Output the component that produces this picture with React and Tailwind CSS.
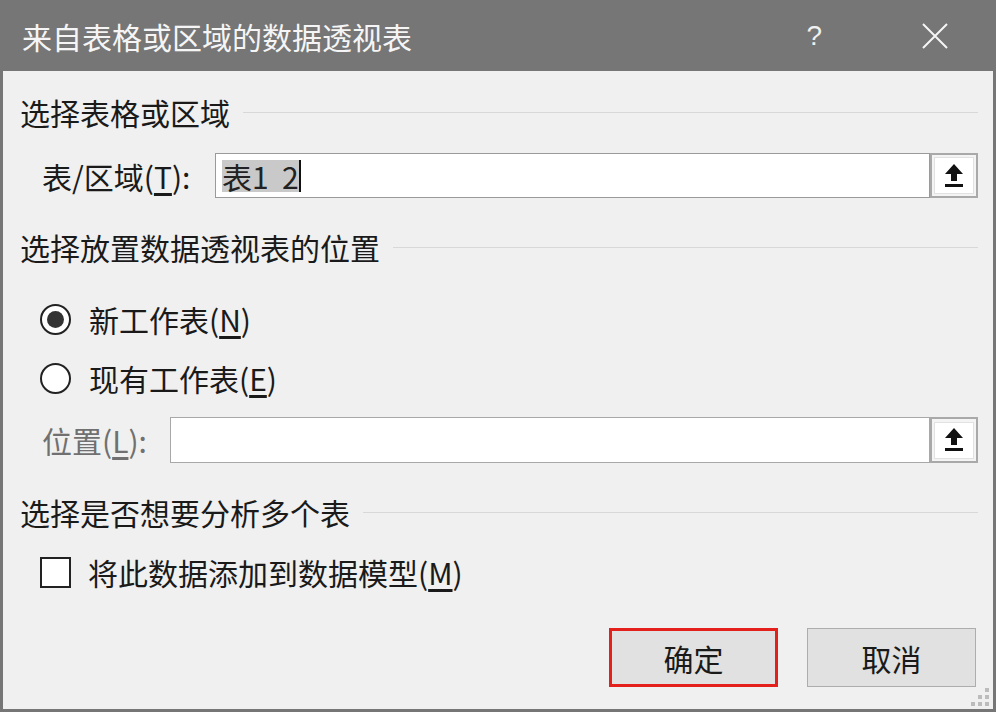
import React from 'react';

const font = { fontFamily: '"Noto Sans CJK SC", "Noto Sans", sans-serif' };

function UploadButton() {
  return (
    <div className="w-[48px] h-full border-2 border-[#a9a9a9] bg-[#f4f4f4] flex items-center justify-center">
      <div className="w-[40px] h-[37px] bg-white border border-[#e2e2e2] flex items-center justify-center">
        <svg width="22" height="26" viewBox="0 0 22 26">
          <path d="M11 1 L20 11 L14 11 L14 18 L8 18 L8 11 L2 11 Z" fill="#111" />
          <rect x="2" y="21" width="18" height="3" fill="#111" />
        </svg>
      </div>
    </div>
  );
}

function Heading({ children }) {
  return (
    <div className="h-[40px] flex items-center gap-[13px]">
      <span className="text-[30px] leading-none text-[#1a1a1a] whitespace-nowrap">{children}</span>
      <div className="flex-1 h-px bg-[#d8d8d8]" />
    </div>
  );
}

function Radio({ checked, children }) {
  return (
    <div className="h-[40px] flex items-center pl-[20px] gap-[18px]">
      <div className="w-[31px] h-[31px] rounded-full border-2 border-[#222] bg-white flex items-center justify-center">
        {checked && <div className="w-[17px] h-[17px] rounded-full bg-[#333]" />}
      </div>
      <span className="text-[30px] leading-none text-[#1a1a1a]">{children}</span>
    </div>
  );
}

export default function App() {
  return (
    <div className="w-[996px] h-[712px] bg-[#767676] flex flex-col overflow-hidden" style={font}>
      {/* Title bar */}
      <div className="h-[71px] flex items-center pl-[22px] pr-[48px] shrink-0">
        <span className="text-[30px] leading-none text-[#f5f5f5]">来自表格或区域的数据透视表</span>
        <div className="flex-1" />
        <span className="text-[28px] leading-none text-[#f0f0f0] font-light mr-[100px]" style={{ fontFamily: '"Liberation Sans", sans-serif' }}>?</span>
        <svg width="26" height="26" viewBox="0 0 26 26">
          <path d="M1 1 L25 25 M25 1 L1 25" stroke="#f5f5f5" strokeWidth="2" />
        </svg>
      </div>

      {/* Body */}
      <div className="flex-1 mx-[3px] mb-[3px] bg-[#f0f0f0] flex flex-col pl-[17px] pr-[15px] relative">
        <div className="mt-[21px]">
          <Heading>选择表格或区域</Heading>
        </div>

        <div className="mt-[21px] h-[45px] flex items-center">
          <span className="w-[195px] pl-[22px] text-[30px] leading-none text-[#1a1a1a] whitespace-nowrap">
            表/区域(<span className="underline underline-offset-4">T</span>):
          </span>
          <div className="flex-1 h-full border border-[#9a9a9a] bg-white flex items-center pl-[6px]">
            <span className="bg-[#c9c9c9] text-[30px] leading-[32px] text-[#222] whitespace-pre">{'表1  2'}</span>
            <span className="w-[2px] h-[32px] bg-[#111]" />
          </div>
          <UploadButton />
        </div>

        <div className="mt-[29px]">
          <Heading>选择放置数据透视表的位置</Heading>
        </div>

        <div className="mt-[32px]">
          <Radio checked>
            新工作表(<span className="underline underline-offset-4">N</span>)
          </Radio>
        </div>
        <div className="mt-[19px]">
          <Radio>
            现有工作表(<span className="underline underline-offset-4">E</span>)
          </Radio>
        </div>

        <div className="mt-[19px] h-[46px] flex items-center">
          <span className="w-[150px] pl-[22px] text-[30px] leading-none text-[#707070] whitespace-nowrap">
            位置(<span className="underline underline-offset-4">L</span>):
          </span>
          <div className="flex-1 h-full border border-[#a8a8a8] bg-white" />
          <UploadButton />
        </div>

        <div className="mt-[29px]">
          <Heading>选择是否想要分析多个表</Heading>
        </div>

        <div className="mt-[20px] h-[40px] flex items-center pl-[20px] gap-[17px]">
          <div className="w-[31px] h-[31px] border-2 border-[#222] bg-white" />
          <span className="text-[30px] leading-none text-[#1a1a1a]">
            将此数据添加到数据模型(<span className="underline underline-offset-4">M</span>)
          </span>
        </div>

        <div className="mt-[36px] flex justify-end gap-[29px] pr-[2px]">
          <button className="w-[169px] h-[59px] border-[3px] border-[#e3201c] bg-[#e1e1e1] text-[30px] leading-none text-[#1a1a1a]">
            确定
          </button>
          <button className="w-[169px] h-[59px] border border-[#adadad] bg-[#e1e1e1] text-[30px] leading-none text-[#1a1a1a]">
            取消
          </button>
        </div>

        {/* resize grip */}
        <svg className="absolute right-[2px] bottom-[1px]" width="22" height="22" viewBox="0 0 22 22">
          <rect x="16" y="2" width="4" height="4" fill="#bcbcbc" />
          <rect x="9" y="9" width="4" height="4" fill="#bcbcbc" />
          <rect x="16" y="9" width="4" height="4" fill="#bcbcbc" />
          <rect x="2" y="16" width="4" height="4" fill="#bcbcbc" />
          <rect x="9" y="16" width="4" height="4" fill="#bcbcbc" />
          <rect x="16" y="16" width="4" height="4" fill="#bcbcbc" />
        </svg>
      </div>
    </div>
  );
}
